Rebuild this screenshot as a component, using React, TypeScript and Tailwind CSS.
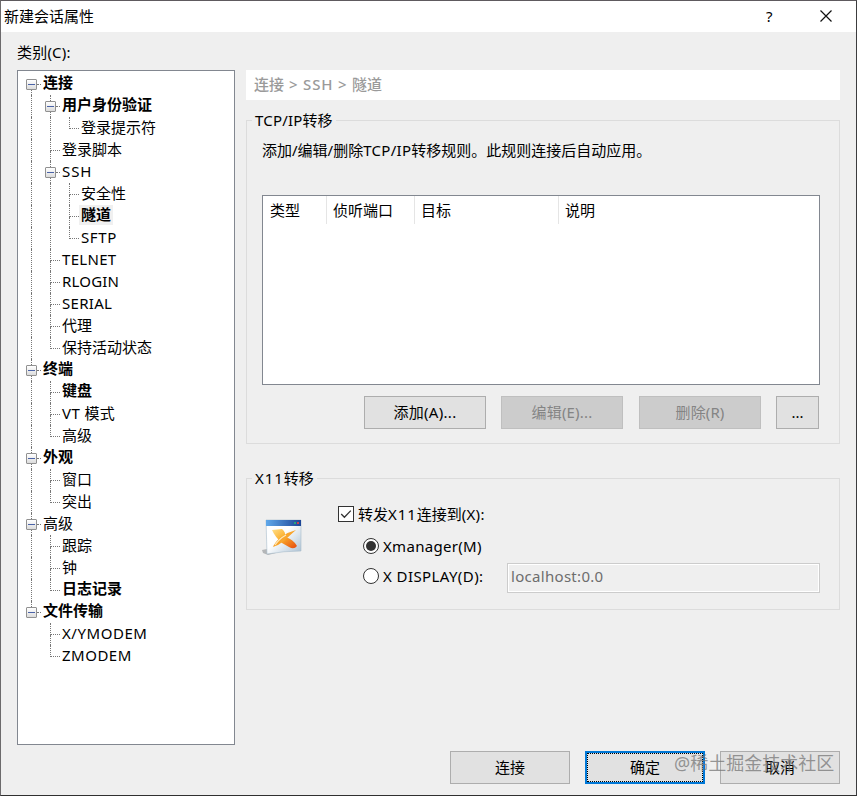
import React, { useState } from 'react';
import clsx from 'clsx';

// What is drawn in each indent column of a tree row
type Cell = 'line' | 'tee' | 'end' | 'none' | 'box-first' | 'box-mid' | 'box-last';

interface TreeRow {
  label: string;
  cells: Cell[];
  bold?: boolean;
  tracking?: string;
}

const rows: TreeRow[] = [
  { label: '连接', cells: ['box-first'], bold: true },
  { label: '用户身份验证', cells: ['line', 'box-mid'], bold: true },
  { label: '登录提示符', cells: ['line', 'line', 'end'] },
  { label: '登录脚本', cells: ['line', 'tee'] },
  { label: 'SSH', cells: ['line', 'box-mid'], tracking: 'tracking-[0.9px]' },
  { label: '安全性', cells: ['line', 'line', 'tee'] },
  { label: '隧道', cells: ['line', 'line', 'tee'], bold: true },
  { label: 'SFTP', cells: ['line', 'line', 'end'], tracking: 'tracking-[0.6px]' },
  { label: 'TELNET', cells: ['line', 'tee'], tracking: 'tracking-[0.3px]' },
  { label: 'RLOGIN', cells: ['line', 'tee'], tracking: 'tracking-[0.2px]' },
  { label: 'SERIAL', cells: ['line', 'tee'], tracking: 'tracking-[0.3px]' },
  { label: '代理', cells: ['line', 'tee'] },
  { label: '保持活动状态', cells: ['line', 'end'] },
  { label: '终端', cells: ['box-mid'], bold: true },
  { label: '键盘', cells: ['line', 'tee'], bold: true },
  { label: 'VT 模式', cells: ['line', 'tee'], tracking: 'tracking-[0.4px]' },
  { label: '高级', cells: ['line', 'end'] },
  { label: '外观', cells: ['box-mid'], bold: true },
  { label: '窗口', cells: ['line', 'tee'] },
  { label: '突出', cells: ['line', 'end'] },
  { label: '高级', cells: ['box-mid'] },
  { label: '跟踪', cells: ['line', 'tee'] },
  { label: '钟', cells: ['line', 'tee'] },
  { label: '日志记录', cells: ['line', 'end'], bold: true },
  { label: '文件传输', cells: ['box-last'], bold: true },
  { label: 'X/YMODEM', cells: ['none', 'tee'], tracking: 'tracking-[0.55px]' },
  { label: 'ZMODEM', cells: ['none', 'end'], tracking: 'tracking-[0.5px]' },
];

const columns = [
  { label: '类型', width: 'w-[64px] pl-[7px]' },
  { label: '侦听端口', width: 'w-[88px] pl-[6px]' },
  { label: '目标', width: 'w-[144px] pl-[6px]' },
];

function TreeCell({ kind }: { kind: Cell }) {
  if (kind.startsWith('box')) {
    return (
      <div className="flex h-[22px] w-[19px] flex-col">
        <div className={clsx('ml-[9px] h-[6px]', kind !== 'box-first' && 'border-l border-dotted border-[#777]')} />
        <div className="ml-1 flex h-[11px] items-center">
          <div className="flex h-[11px] w-[11px] items-center justify-center rounded-[1px] border border-[#919191] bg-linear-to-b from-white to-[#dcdcdc]">
            <div className="h-px w-[7px] bg-[#4b63a7]" />
          </div>
          <div className="w-[4px] border-t border-dotted border-[#777]" />
        </div>
        <div className={clsx('ml-[9px] h-[5px]', kind !== 'box-last' && 'border-l border-dotted border-[#777]')} />
      </div>
    );
  }

  return (
    <div className="flex h-[22px] w-[19px] flex-col pl-[9px]">
      {kind === 'line' && <div className="h-[22px] border-l border-dotted border-[#777]" />}
      {(kind === 'tee' || kind === 'end') && <div className="h-[12px] border-b border-l border-dotted border-[#777]" />}
      {kind === 'tee' && <div className="h-[10px] border-l border-dotted border-[#777]" />}
    </div>
  );
}

function Button({ children, className, disabled, primary }: {
  children: React.ReactNode;
  className?: string;
  disabled?: boolean;
  primary?: boolean;
}) {
  return (
    <button
      disabled={disabled}
      className={clsx(
        'flex h-[33px]',
        disabled && 'border border-[#bfbfbf] bg-[#cccccc] text-[#848484]',
        primary && 'border-2 border-[#0078d7] bg-[#e1e1e1]',
        !disabled && !primary && 'border border-[#adadad] bg-[#e1e1e1]',
        className
      )}
    >
      <span
        className={clsx(
          'flex h-full w-full items-center justify-center',
          primary ? 'border border-dotted border-black pb-px' : 'pb-[2px]'
        )}
      >
        {children}
      </span>
    </button>
  );
}

function Radio({ checked }: { checked: boolean }) {
  return (
    <svg width="16" height="16" viewBox="0 0 16 16">
      <circle cx="8" cy="8" r="7.5" fill="#fff" stroke="#333" />
      {checked && <circle cx="8" cy="8" r="5" fill="#333" />}
    </svg>
  );
}

function XmanagerIcon() {
  return (
    <svg width="40" height="37" viewBox="0 0 40 37">
      <defs>
        <linearGradient id="pane" x1="0" y1="0" x2="1" y2="1">
          <stop offset="0.45" stopColor="#fdfeff" />
          <stop offset="1" stopColor="#a9bfd2" />
        </linearGradient>
        <linearGradient id="bar" x1="0" y1="0" x2="1" y2="0">
          <stop offset="0" stopColor="#5fa8ea" />
          <stop offset="1" stopColor="#1c4496" />
        </linearGradient>
        <linearGradient id="arm" x1="0" y1="0" x2="1" y2="1">
          <stop offset="0" stopColor="#ffe08a" />
          <stop offset="0.45" stopColor="#fbae2c" />
          <stop offset="1" stopColor="#e5480e" />
        </linearGradient>
      </defs>
      <path d="M0 31 L5 30 L14 34 L6 36 L1 34 Z" fill="#b4b6b8" />
      <path d="M4 1 H39 V32 Q22 32 5 35 Z" fill="url(#pane)" stroke="#a8bccb" strokeWidth="0.6" />
      <path d="M4 1 H39 V7 H4 Z" fill="url(#bar)" />
      <rect x="32" y="3" width="2" height="2" fill="#28a37d" />
      <rect x="35" y="3" width="2" height="2" fill="#c9414f" />
      <path d="M10 11 L20 10 Q24 13 23 18 Q31 20 35 27 Q32 31 27 28 L20 24 Q13 18 10 11 Z" fill="url(#arm)" />
      <path d="M34 11 Q26 18 22 22 Q17 26 11 28 Q13 23 19 18 Q26 13 34 11 Z" fill="#f8a52e" />
      <path d="M24 16 Q17 20 13 26" fill="none" stroke="#ffe9b8" strokeWidth="1.2" />
    </svg>
  );
}

export default function App() {
  const [selected, setSelected] = useState(6);
  const [forward, setForward] = useState(true);
  const [target, setTarget] = useState('xmanager');

  return (
    <div className="relative flex h-[796px] w-[857px] flex-col overflow-hidden border border-t-[#5e5a5e] border-r-[#3c3c3e] border-b-[#303030] border-l-[#6c6a6c] bg-[#efefef] font-['Noto_Sans','Noto_Sans_CJK_SC',sans-serif] text-[15px] leading-[22px] whitespace-nowrap text-black">
      {/* Title bar */}
      <div className="flex h-[31px] shrink-0 items-center bg-white pb-[2px] pl-[3px]">
        <span className="flex-1">新建会话属性</span>
        <span className="w-[57px] pl-[3px]">?</span>
        <svg className="mt-px mr-[24px]" width="12" height="12" viewBox="0 0 12 12">
          <path d="M0.5 0.5 L11.5 11.5 M11.5 0.5 L0.5 11.5" stroke="#111" strokeWidth="1.2" />
        </svg>
      </div>

      <div className="flex flex-1 pl-4">
        {/* Category tree */}
        <div className="w-[218px] pt-[9px]">
          <div className="h-[29px] tracking-[0.2px]">类别(C):</div>
          <div className="h-[675px] border border-[#828790] bg-white pt-[2px] pl-1">
            {rows.map((row, idx) => (
              <div key={idx} className="flex h-[22px]" onClick={() => setSelected(idx)}>
                {row.cells.map((cell, i) => (
                  <TreeCell key={i} kind={cell} />
                ))}
                <span
                  className={clsx(
                    'h-[20px] px-[2px]',
                    row.bold ? 'font-bold leading-[19px]' : 'leading-[20px]',
                    selected === idx && 'bg-[#f0f0f0]',
                    row.tracking
                  )}
                >
                  {row.label}
                </span>
              </div>
            ))}
          </div>
        </div>

        {/* Settings page */}
        <div className="ml-[11px] w-[594px] pt-[38px]">
          <div className="flex h-[30px] bg-white pl-2 leading-[29px] font-medium text-[#9a9a9a]">
            <span className="w-[35px]">连接</span>
            <span className="w-[14px]">&gt;</span>
            <span className="w-[35px] tracking-[0.9px]">SSH</span>
            <span className="w-[14px]">&gt;</span>
            <span>隧道</span>
          </div>

          <fieldset className="mt-[10px] h-[334px] border border-[#dcdcdc] pl-[15px]">
            <legend className="-ml-[10px] h-[21px] px-[3px] leading-[20px]">
              <span className="tracking-[0.2px]">TCP/IP</span>转移
            </legend>
            <p className="mt-[8px]">
              添加/编辑/删除<span className="tracking-[0.3px]">TCP/IP</span>转移规则。此规则连接后自动应用。
            </p>
            <div className="mt-[34px] h-[190px] w-[558px] border border-[#828790] bg-white">
              <div className="flex h-[28px] leading-[29px]">
                {columns.map((col) => (
                  <div key={col.label} className={clsx('border-r border-[#e5e5e5]', col.width)}>
                    {col.label}
                  </div>
                ))}
                <div className="pl-[6px]">说明</div>
              </div>
            </div>
            <div className="mt-[11px] ml-[102px] flex">
              <Button className="w-[122px] tracking-[0.3px]">添加(A)...</Button>
              <Button className="ml-[15px] w-[122px] tracking-[0.2px]" disabled>编辑(E)...</Button>
              <Button className="ml-[16px] w-[122px] tracking-[0.1px]" disabled>删除(R)</Button>
              <Button className="ml-[15px] w-[43px]">...</Button>
            </div>
          </fieldset>

          <fieldset className="mt-[24px] h-[142px] border border-[#dcdcdc] pl-[15px]">
            <legend className="-ml-[10px] h-[21px] px-[3px] leading-[20px]">
              <span className="tracking-[0.9px]">X11</span>转移
            </legend>
            <div className="flex">
              <div className="w-[76px] pt-[30px]">
                <XmanagerIcon />
              </div>
              <div className="pt-[14px]">
                <label className="flex h-[22px] items-center" onClick={() => setForward(!forward)}>
                  <svg width="16" height="16" viewBox="0 0 16 16">
                    <rect x="0.5" y="0.5" width="15" height="15" fill="#fff" stroke="#333" />
                    {forward && <path d="M3.2 8 L6.4 11.2 L12.8 4.6" fill="none" stroke="#333" strokeWidth="1.3" />}
                  </svg>
                  <span className="ml-1">
                    转发<span className="tracking-[0.9px]">X11</span>连接到<span className="tracking-[0.3px]">(X):</span>
                  </span>
                </label>
                <label className="mt-[10px] ml-[25px] flex h-[22px] items-center" onClick={() => setTarget('xmanager')}>
                  <Radio checked={target === 'xmanager'} />
                  <span className="ml-1 tracking-[0.3px]">Xmanager(M)</span>
                </label>
                <div className="mt-[6px] ml-[25px] flex h-[30px] items-center">
                  <label className="flex w-[144px] items-center pb-[4px]" onClick={() => setTarget('display')}>
                    <Radio checked={target === 'display'} />
                    <span className="ml-1 tracking-[0.42px]">X DISPLAY(D):</span>
                  </label>
                  <div className="h-[30px] w-[313px] border border-[#cccccc] bg-white p-px">
                    <div className="h-full bg-[#efefef] pl-[2px] leading-[22px] tracking-[0.3px] text-[#6d6d6d]">localhost:0.0</div>
                  </div>
                </div>
              </div>
            </div>
          </fieldset>

          <div className="mt-[141px] flex justify-end gap-[15px]">
            <Button className="w-[120px]">连接</Button>
            <Button className="w-[120px]" primary>确定</Button>
            <Button className="w-[120px]">取消</Button>
          </div>
        </div>
      </div>

      {/* Watermark */}
      <div className="pointer-events-none absolute top-[750px] left-[673px] text-[18px] leading-[24px] text-[#777]/75">
        @稀土掘金技术社区
      </div>
    </div>
  );
}
